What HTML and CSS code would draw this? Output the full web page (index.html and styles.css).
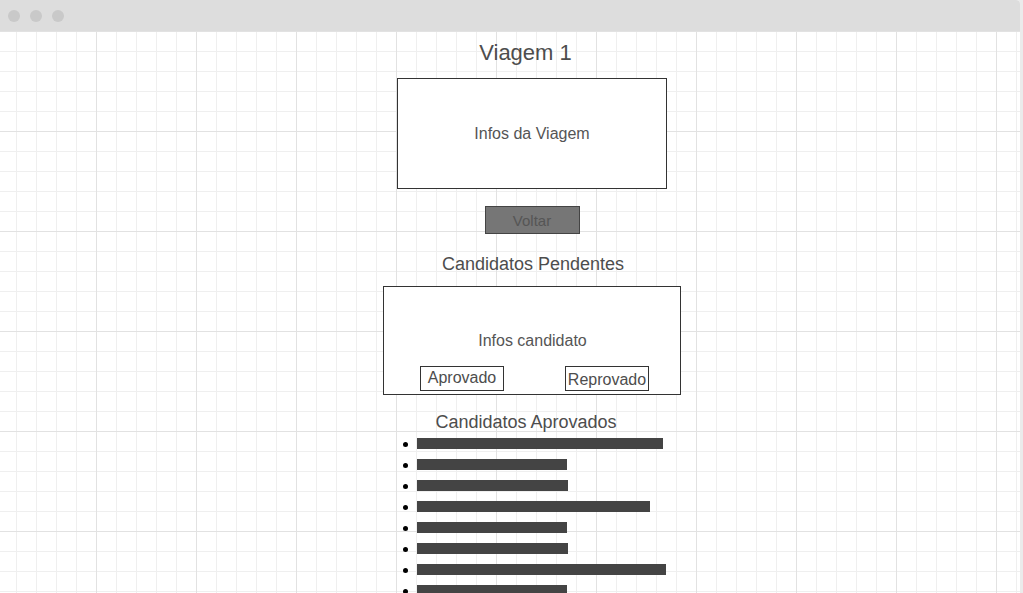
FILE: index.html
```html
<!DOCTYPE html>
<html lang="pt">
<head>
<meta charset="utf-8">
<title>Viagem 1</title>
<link rel="stylesheet" href="styles.css">
</head>
<body>
<div class="window">
  <div class="titlebar">
    <span class="dot"></span><span class="dot"></span><span class="dot"></span>
  </div>
  <div class="canvas">
    <main class="column">
      <h1 class="title">Viagem 1</h1>
      <div class="trip-box">Infos da Viagem</div>
      <button class="back-btn" type="button">Voltar</button>
      <h2 class="section-title pending">Candidatos Pendentes</h2>
      <div class="candidate-box">
        <div class="candidate-info">Infos candidato</div>
        <div class="candidate-actions">
          <button class="action-btn" type="button">Aprovado</button>
          <button class="action-btn reject" type="button">Reprovado</button>
        </div>
      </div>
      <h2 class="section-title approved">Candidatos Aprovados</h2>
      <ul class="approved-list">
        <li><span class="bar" style="width:246px"></span></li>
        <li><span class="bar" style="width:150px"></span></li>
        <li><span class="bar" style="width:151px"></span></li>
        <li><span class="bar" style="width:233px"></span></li>
        <li><span class="bar" style="width:150px"></span></li>
        <li><span class="bar" style="width:151px"></span></li>
        <li><span class="bar" style="width:249px"></span></li>
        <li><span class="bar" style="width:150px"></span></li>
      </ul>
    </main>
  </div>
</div>
</body>
</html>
```

FILE: styles.css
```css
html, body {
  margin: 0;
  padding: 0;
  height: 100%;
  overflow: hidden;
}

body {
  background: #ebebeb;
  font-family: "Liberation Sans", Arial, sans-serif;
  color: #4d4d4d;
}

.window {
  width: 1020px;
  height: 100%;
  display: flex;
  flex-direction: column;
  background: #fff;
  border-top-right-radius: 4px;
  overflow: hidden;
}

.titlebar {
  height: 31px;
  flex: none;
  background: #dddddd;
  display: flex;
  align-items: center;
  gap: 10px;
  padding-left: 8px;
}

.dot {
  width: 12px;
  height: 12px;
  border-radius: 50%;
  background: #c9c9c9;
}

.canvas {
  flex: 1;
  background-color: #fff;
  background-image:
    linear-gradient(to right, #e2e2e2 1px, transparent 1px),
    linear-gradient(to bottom, #e2e2e2 1px, transparent 1px),
    linear-gradient(to right, #efefef 1px, transparent 1px),
    linear-gradient(to bottom, #efefef 1px, transparent 1px);
  background-size: 100px 100px, 100px 100px, 20px 20px, 20px 20px;
  background-position: -4px 0, -4px 0, -4px 0, -4px 0;
}

.column {
  width: 300px;
  margin-left: 382px;
  display: flex;
  flex-direction: column;
  align-items: center;
  padding-top: 9px;
}

.title {
  margin: 0;
  font-size: 22px;
  line-height: 26px;
  font-weight: normal;
  color: #4d4d4d;
  padding-right: 13px;
}

.trip-box {
  box-sizing: border-box;
  margin-top: 12px;
  width: 270px;
  height: 111px;
  border: 1px solid #333;
  background: #fff;
  display: flex;
  align-items: center;
  justify-content: center;
  font-size: 16px;
  color: #555;
}

.back-btn {
  box-sizing: border-box;
  margin-top: 17px;
  width: 95px;
  height: 28px;
  padding: 0;
  border: 1px solid #444;
  background: #767676;
  color: #555;
  font-family: inherit;
  font-size: 15px;
}

.section-title {
  margin: 0;
  font-size: 18px;
  line-height: 22px;
  font-weight: normal;
  color: #4d4d4d;
}

.section-title.pending {
  margin-top: 19px;
  padding-left: 2px;
}

.candidate-box {
  box-sizing: border-box;
  margin-top: 11px;
  width: 298px;
  height: 109px;
  border: 1px solid #333;
  background: #fff;
  display: flex;
  flex-direction: column;
  padding: 45px 31px 3px 36px;
}

.candidate-info {
  text-align: center;
  font-size: 16px;
  line-height: 18px;
  color: #555;
  padding-right: 4px;
}

.candidate-actions {
  margin-top: 16px;
  display: flex;
  justify-content: space-between;
}

.action-btn {
  box-sizing: border-box;
  width: 84px;
  height: 25px;
  padding: 0 0 2px;
  border: 1px solid #333;
  background: #fff;
  color: #4d4d4d;
  font-family: inherit;
  font-size: 16px;
  line-height: 18px;
}

.action-btn.reject {
  padding: 3px 0 0;
}

.section-title.approved {
  margin-top: 16px;
  padding-right: 12px;
}

.approved-list {
  list-style: none;
  margin: 0;
  padding: 0;
  align-self: flex-start;
  margin-left: 21px;
}

.approved-list li {
  height: 21px;
  display: flex;
  align-items: center;
}

.approved-list li::before {
  content: "";
  width: 5px;
  height: 5px;
  border-radius: 50%;
  background: #000;
  margin-right: 9px;
  margin-top: 1px;
}

.bar {
  display: block;
  height: 11px;
  background: #444;
}
```
